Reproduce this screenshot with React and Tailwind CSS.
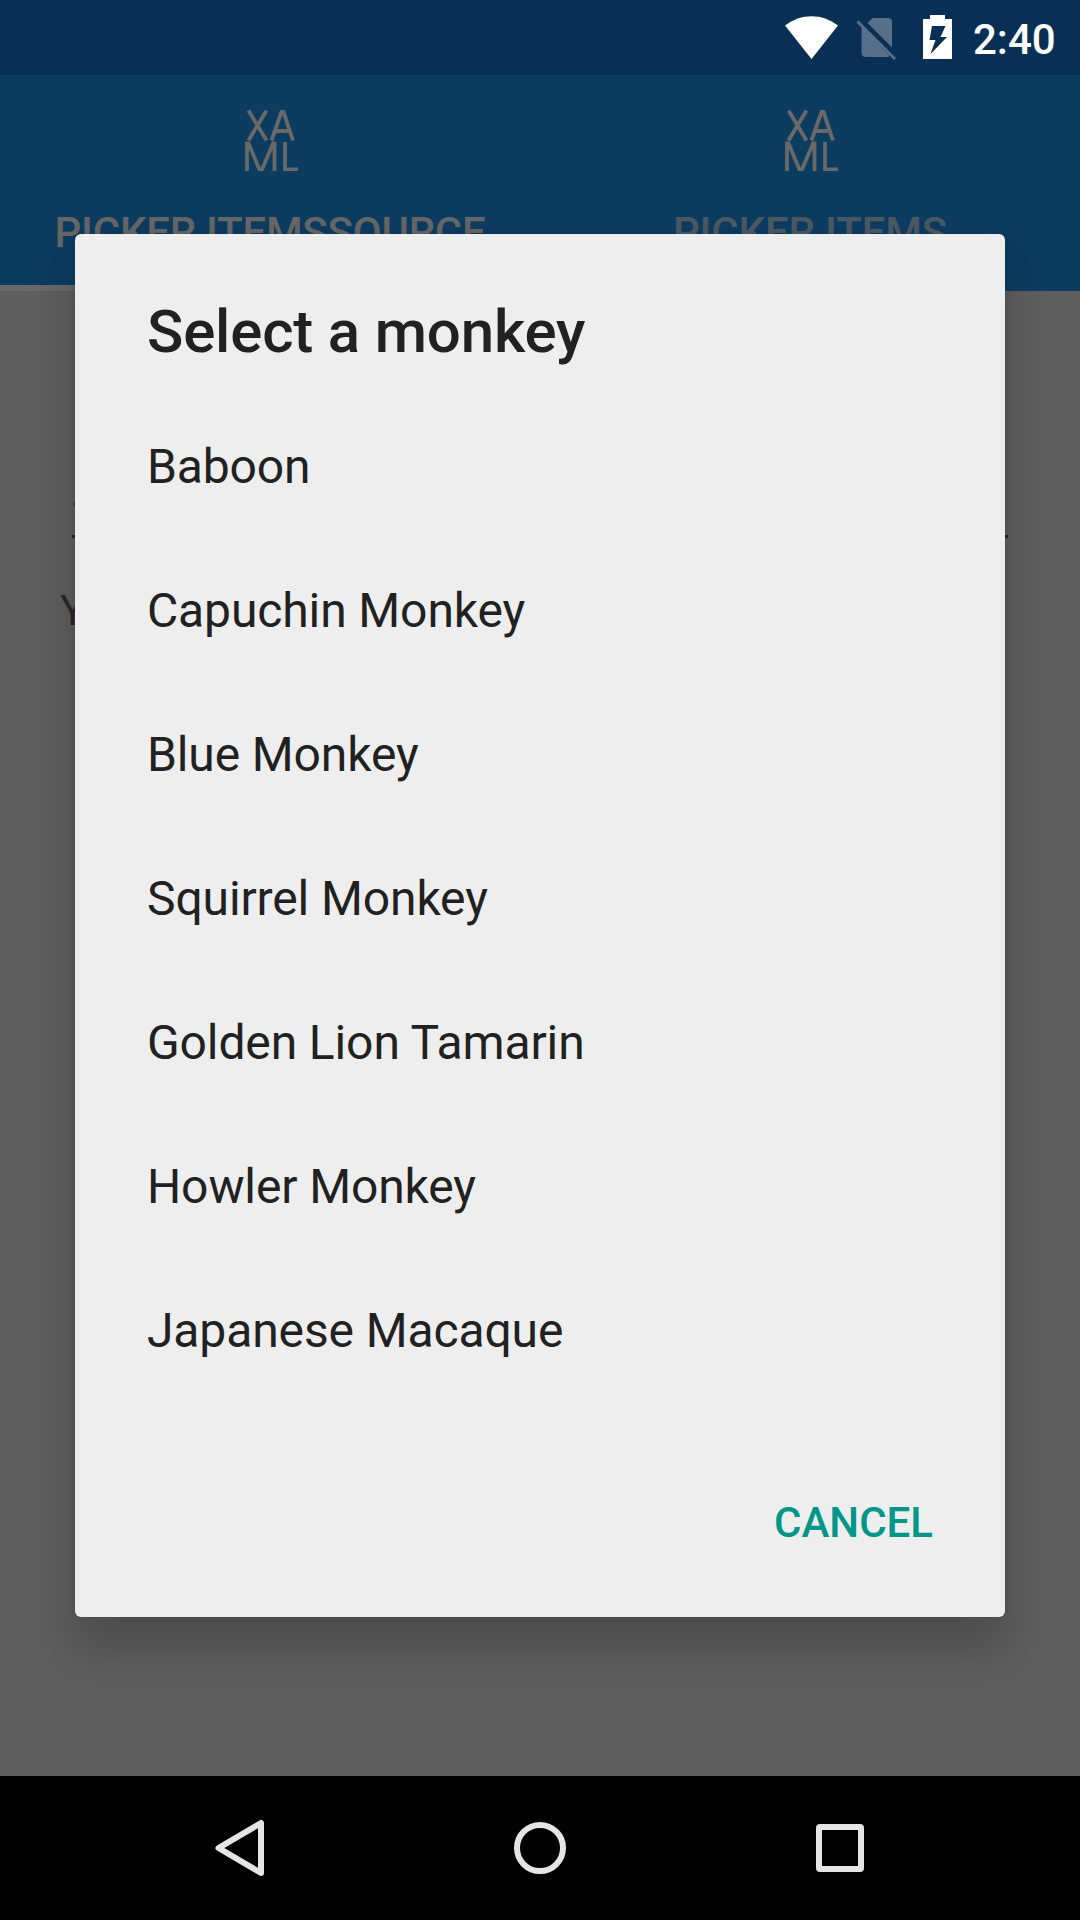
const monkeys = [
  "Baboon",
  "Capuchin Monkey",
  "Blue Monkey",
  "Squirrel Monkey",
  "Golden Lion Tamarin",
  "Howler Monkey",
  "Japanese Macaque",
];

function StatusBar() {
  return (
    <div className="flex h-[75px] shrink-0 items-center justify-end bg-[#0a2f54] pr-[25px] text-white">
      <svg className="mr-[18px] h-[75px] w-[53px]" viewBox="785 0 53 75" fill="currentColor">
        <path d="M785 25.5C801 13 822 13 838 25.5L811.5 59Z" />
      </svg>
      <svg className="mr-[27px] h-[75px] w-[40px]" viewBox="856 0 40 75" fill="#576f88">
        <path d="M872.5 18h15.5q4 0 4 4v25.5L867.500 23Z" />
        <path d="M861.500 26.500L889.500 55.500Q889 57 887.500 57H866q-4.500 0-4.500-4.500Z" />
        <path d="M858.500 20.500L896 58L894 60L856.500 22.500Z" />
      </svg>
      <svg className="mr-[21px] h-[75px] w-[29px]" viewBox="923 0 29 75" fill="currentColor">
        <path
          fillRule="evenodd"
          d="M930 15h15v4h7v40h-29V19h7ZM932 26L929.500 40H935.500L930.500 54L947 37H940.500L945.500 26Z"
        />
      </svg>
      <span className="mt-[5px] w-[82px] whitespace-nowrap text-[42px] leading-none font-medium">2:40</span>
    </div>
  );
}

function XamlIcon() {
  return (
    <svg
      className="h-[64px] w-[58px] blur-[0.5px]"
      viewBox="241 107 58 64"
      fill="none"
      stroke="#696969"
      strokeWidth="3.8"
    >
      <path d="M248.500 110.500L266.500 140.500M266.500 110.500L248.500 140.500M271.500 140.500L281.500 112H283.500L293 140.500M274.500 131H290.500" />
      <path d="M247 171V143.500H248.500L259.500 169.500H262L273 143.500H274.500V171M285 142V169.500H298" />
    </svg>
  );
}

function Tab({ label, active }) {
  return (
    <div className="flex flex-1 flex-col">
      <div className="flex h-[210px] flex-col items-center pt-[32px]">
        <XamlIcon />
        <span
          className={
            active
              ? "mt-[37px] text-[42px] leading-[49px] font-medium tracking-[-0.25px] text-[#666666]"
              : "mt-[37px] text-[42px] leading-[49px] font-medium tracking-[-0.15px] text-[#4b5963]"
          }
        >
          {label}
        </span>
      </div>
      <div className={active ? "h-[6px] bg-[#696969]" : "h-[6px]"} />
    </div>
  );
}

function NavBar() {
  return (
    <div className="flex h-[144px] shrink-0 items-center justify-between bg-black px-[210px] text-[#e5e5e5]">
      <svg className="h-[60px] w-[60px]" viewBox="210 1818 60 60" fill="none" stroke="currentColor" strokeWidth="6" strokeLinejoin="round">
        <path d="M261 1823V1873L218.500 1848Z" />
      </svg>
      <svg className="h-[60px] w-[60px]" viewBox="510 1818 60 60" fill="none" stroke="currentColor" strokeWidth="6">
        <circle cx="540" cy="1848" r="23" />
      </svg>
      <svg className="h-[60px] w-[60px]" viewBox="810 1818 60 60" fill="none" stroke="currentColor" strokeWidth="6" strokeLinejoin="round">
        <rect x="819" y="1827" width="42" height="42" rx="1" />
      </svg>
    </div>
  );
}

function PickerDialog() {
  return (
    <div className="absolute top-[234px] left-[75px] flex h-[1383px] w-[930px] flex-col rounded-[6px] bg-[#eeeeee] text-[#212121] shadow-[0_30px_46px_6px_rgba(0,0,0,0.19),0_0_6px_rgba(0,0,0,0.08)]">
      <h1 className="h-[161px] px-[72px] pt-[63px] text-[60px] leading-[70px] font-medium tracking-[-0.18px]">Select a monkey</h1>
      <ul>
        {monkeys.map((name) => (
          <li key={name} className="flex h-[144px] items-center px-[72px] text-[48px] tracking-[-0.12px]">
            {name}
          </li>
        ))}
      </ul>
      <div className="mt-[47px] flex justify-end pr-[72px]">
        <button className="h-[144px] text-[42px] font-medium text-[#009688]">CANCEL</button>
      </div>
    </div>
  );
}

export default function App() {
  return (
    <div className="relative flex h-[1920px] w-[1080px] flex-col overflow-hidden bg-[#5f5f5f] font-['Roboto',sans-serif]">
      <StatusBar />
      <div className="flex h-[216px] shrink-0 bg-[#0d3c61]">
        <Tab label="PICKER ITEMSSOURCE" active />
        <Tab label="PICKER ITEMS" />
      </div>
      <div className="flex flex-1 flex-col pt-[178px] text-[#292929]">
        <div className="mx-[72px] h-[69px] border-b-[3px] border-[#262626] text-[48px] leading-[56px]">S</div>
        <div className="mt-[43px] ml-[60px] text-[42px] leading-[60px]">Y</div>
      </div>
      <NavBar />
      <PickerDialog />
    </div>
  );
}
